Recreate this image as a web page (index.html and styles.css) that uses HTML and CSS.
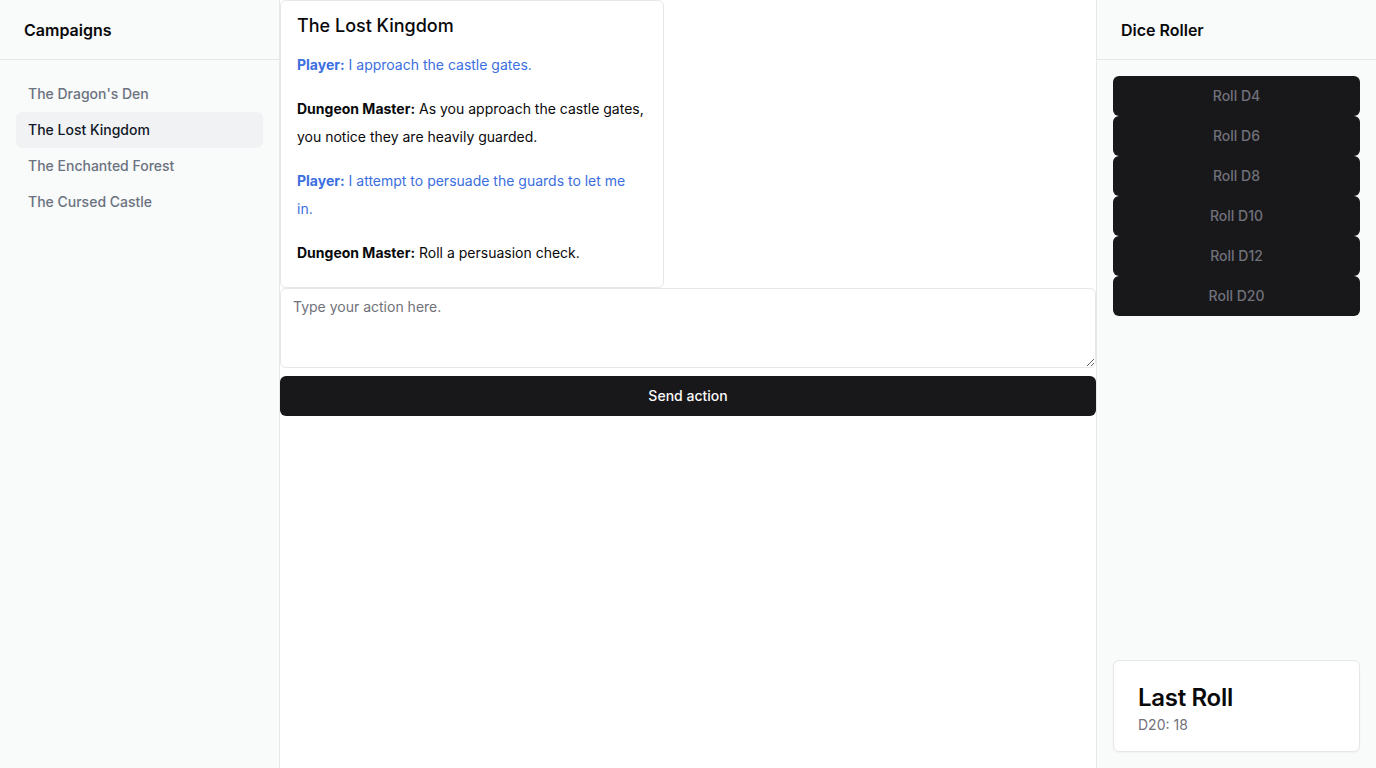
FILE: index.html
```html
<!DOCTYPE html>
<html>
<head>
<meta charset="utf-8">
<link rel="stylesheet" href="styles.css">
</head>
<body>
<div class="app">
  <aside class="sidebar left">
    <div class="side-header">Campaigns</div>
    <nav class="nav">
      <a class="nav-item">The Dragon's Den</a>
      <a class="nav-item active">The Lost Kingdom</a>
      <a class="nav-item">The Enchanted Forest</a>
      <a class="nav-item">The Cursed Castle</a>
    </nav>
  </aside>
  <main class="main">
    <div class="story">
      <h2 class="story-title">The Lost Kingdom</h2>
      <p class="msg player"><b>Player:</b> I approach the castle gates.</p>
      <p class="msg dm"><b>Dungeon Master:</b> As you approach the castle gates, you notice they are heavily guarded.</p>
      <p class="msg player"><b>Player:</b> I attempt to persuade the guards to let me in.</p>
      <p class="msg dm"><b>Dungeon Master:</b> Roll a persuasion check.</p>
    </div>
    <textarea class="action" placeholder="Type your action here."></textarea>
    <button class="send">Send action</button>
  </main>
  <aside class="sidebar right">
    <div class="side-header">Dice Roller</div>
    <div class="dice-body">
      <div class="dice">
        <button class="die">Roll D4</button>
        <button class="die">Roll D6</button>
        <button class="die">Roll D8</button>
        <button class="die">Roll D10</button>
        <button class="die">Roll D12</button>
        <button class="die">Roll D20</button>
      </div>
      <div class="last">
        <div class="last-title">Last Roll</div>
        <div class="last-value">D20: 18</div>
      </div>
    </div>
  </aside>
</div>
</body>
</html>
```
FILE: styles.css
```css
* { box-sizing: border-box; }
html, body { margin: 0; height: 100%; }
body {
  font-family: Inter, "Noto Sans", sans-serif;
  color: #09090b;
  background: #fff;
}
.app {
  display: flex;
  height: 768px;
}
.sidebar {
  width: 280px;
  flex: none;
  background: #f9fafa;
  display: flex;
  flex-direction: column;
}
.sidebar.left { border-right: 1px solid #e5e7eb; }
.sidebar.right { border-left: 1px solid #e5e7eb; }
.side-header {
  height: 60px;
  padding: 0 24px;
  display: flex;
  align-items: center;
  font-size: 16px;
  font-weight: 600;
  border-bottom: 1px solid #e5e7eb;
}
.nav {
  padding: 16px;
  display: flex;
  flex-direction: column;
}
.nav-item {
  height: 36px;
  padding: 0 12px 2px;
  display: flex;
  align-items: center;
  border-radius: 6px;
  font-size: 14px;
  font-weight: 500;
  color: #6b7280;
}
.nav-item.active {
  background: #f1f2f4;
  color: #111827;
}
.main {
  flex: 1;
  display: flex;
  flex-direction: column;
  align-items: flex-start;
}
.story {
  width: 384px;
  border: 1px solid #e5e7eb;
  border-radius: 6px;
  padding: 12px 19px 8px 16px;
  background: #fff;
}
.story-title {
  margin: 0 0 12px;
  font-size: 18px;
  font-weight: 500;
  line-height: 26px;
}
.msg {
  margin: 0 0 16px;
  font-size: 14px;
  line-height: 28px;
}
.msg:last-child { margin-bottom: 12px; }
.msg b { font-weight: 700; }
.msg.player { color: #3b6fe0; }
.msg.dm { color: #09090b; }
.action {
  width: 100%;
  height: 80px;
  border: 1px solid #e5e7eb;
  border-radius: 6px;
  padding: 8px 12px;
  font-family: Inter, "Noto Sans", sans-serif;
  font-size: 14px;
  line-height: 20px;
  resize: vertical;
  background: #fff;
}
.action::placeholder { color: #71717a; }
.send {
  margin-top: 8px;
  width: 100%;
  height: 40px;
  padding: 0 0 2px;
  border: none;
  border-radius: 6px;
  background: #18181b;
  color: #fafafa;
  font-family: Inter, "Noto Sans", sans-serif;
  font-size: 14px;
  font-weight: 500;
}
.dice-body {
  flex: 1;
  padding: 16px;
  display: flex;
  flex-direction: column;
  justify-content: space-between;
}
.dice {
  display: flex;
  flex-direction: column;
}
.die {
  height: 40px;
  padding: 0 0 2px;
  border: none;
  border-radius: 6px;
  background: #18181b;
  color: #71717a;
  font-family: Inter, "Noto Sans", sans-serif;
  font-size: 14px;
  font-weight: 500;
}
.last {
  height: 92px;
  background: #fff;
  border: 1px solid #e5e7eb;
  border-radius: 6px;
  padding: 22px 24px 0;
  box-shadow: 0 1px 2px rgba(0,0,0,0.04);
}
.last-title {
  font-size: 24px;
  font-weight: 600;
  line-height: 30px;
  letter-spacing: -0.3px;
}
.last-value {
  margin-top: 2px;
  font-size: 14px;
  color: #71717a;
  line-height: 20px;
}
```
